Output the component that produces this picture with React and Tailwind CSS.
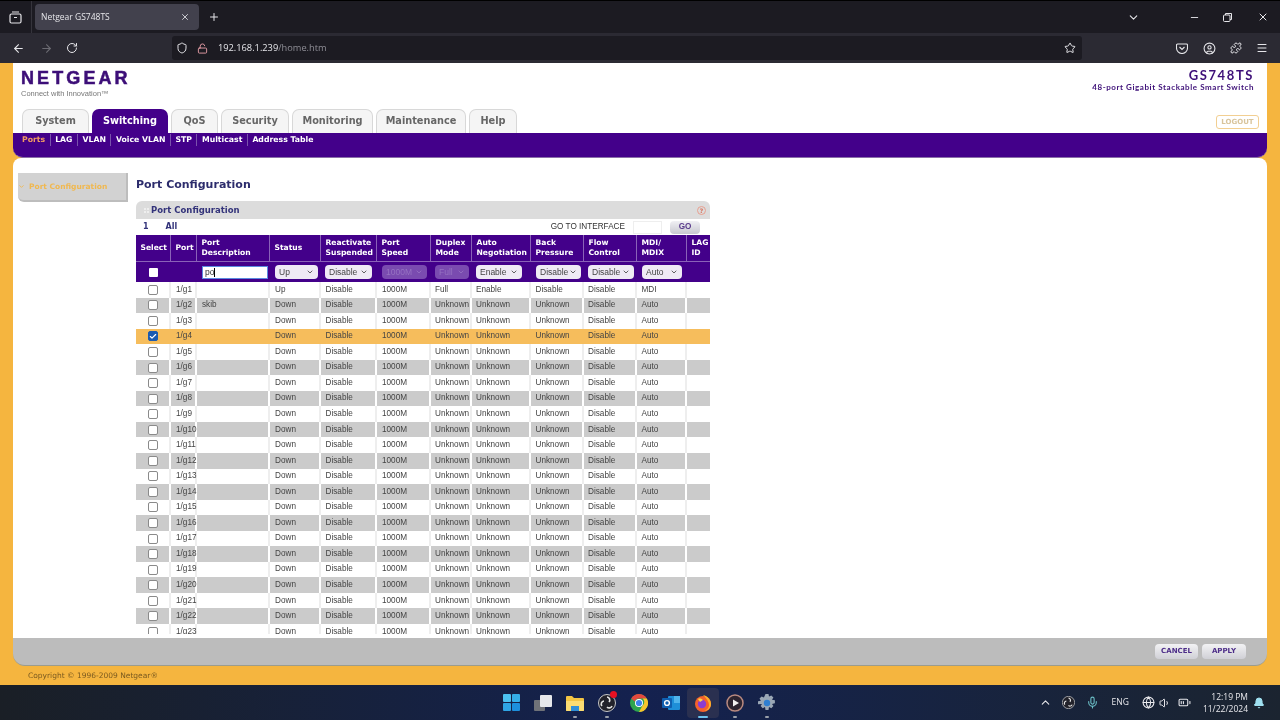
import { ArrowLeft, ArrowRight, RotateCw, Shield, LockOpen, Star, ChevronDown, ChevronUp, Minus, X, Plus, Menu, Puzzle, CircleUser, Check, Mic, Globe, Volume1, BatteryMedium, Bell } from 'lucide-react';

const COLS = 'grid grid-cols-[35px_26px_73px_51px_56px_54px_41px_59px_53px_53px_50px_23px]';

const HEADERS = [
  ['Select'],
  ['Port'],
  ['Port', 'Description'],
  ['Status'],
  ['Reactivate', 'Suspended'],
  ['Port', 'Speed'],
  ['Duplex', 'Mode'],
  ['Auto', 'Negotiation'],
  ['Back', 'Pressure'],
  ['Flow', 'Control'],
  ['MDI/', 'MDIX'],
  ['LAG', 'ID'],
];

const TABS = [
  { label: 'System', width: 'w-[67px]' },
  { label: 'Switching', width: 'w-[76px]', active: true },
  { label: 'QoS', width: 'w-[47px]' },
  { label: 'Security', width: 'w-[68px]' },
  { label: 'Monitoring', width: 'w-[81px]' },
  { label: 'Maintenance', width: 'w-[90px]' },
  { label: 'Help', width: 'w-[48px]' },
];

const SUBNAV = ['Ports', 'LAG', 'VLAN', 'Voice VLAN', 'STP', 'Multicast', 'Address Table'];

const ROWS = Array.from({ length: 23 }, (_, i) => {
  const n = i + 1;
  const first = n === 1;
  return {
    port: `1/g${n}`,
    desc: n === 2 ? 'skib' : '',
    status: first ? 'Up' : 'Down',
    duplex: first ? 'Full' : 'Unknown',
    auto: first ? 'Enable' : 'Unknown',
    back: first ? 'Disable' : 'Unknown',
    mdi: first ? 'MDI' : 'Auto',
    checked: n === 4,
    tone: n === 4 ? 'orange' : n % 2 === 0 ? 'gray' : 'white',
  };
});

const ROW_BG = {
  white: 'bg-white',
  gray: 'bg-[#cbcbcb]',
  orange: 'bg-[#f6bd5c]',
};

function Cell({ tone, className = 'pl-[4.5px]', children }) {
  const line = tone === 'white' ? 'border-[#eeeeee]' : tone === 'gray' ? 'border-white' : 'border-transparent';
  return <div className={`flex items-center border-r-2 whitespace-nowrap ${line} ${className}`}>{children}</div>;
}

function Pill({ label, width, disabled }) {
  return (
    <div className={`flex h-[14px] items-center justify-between rounded-[4px] pl-[4px] pr-[4px] font-['Liberation_Sans',sans-serif] text-[8.5px] ${width} ${disabled ? 'bg-[#7a4bb0] text-[#9672c2]' : 'bg-[#efeaf5] text-[#444]'}`}>
      {label}
      <ChevronDown size={8} strokeWidth={2.5} />
    </div>
  );
}

function Checkbox({ checked }) {
  return (
    <div className={`flex h-[10px] w-[10px] items-center justify-center rounded-[2px] border ${checked ? 'border-[#1c5bb0] bg-[#1c5bb0]' : 'border-[#8a8a8a] bg-white'}`}>
      {checked && <Check size={9} strokeWidth={3.5} className="text-white" />}
    </div>
  );
}

function WindowsLogo() {
  return (
    <svg width="17" height="17" viewBox="0 0 17 17">
      <rect x="0" y="0" width="8" height="8" rx="1" fill="#4cc2f1" />
      <rect x="9" y="0" width="8" height="8" rx="1" fill="#35aee8" />
      <rect x="0" y="9" width="8" height="8" rx="1" fill="#2fa6e6" />
      <rect x="9" y="9" width="8" height="8" rx="1" fill="#1d8fdc" />
    </svg>
  );
}

function TaskViewIcon() {
  return (
    <svg width="18" height="16" viewBox="0 0 18 16">
      <rect x="0" y="5" width="11" height="11" rx="1" fill="#6f7278" />
      <rect x="6" y="0" width="12" height="12" rx="1" fill="#e6e8ec" />
    </svg>
  );
}

function FolderIcon() {
  return (
    <svg width="18" height="16" viewBox="0 0 18 16">
      <path d="M0 2 a1 1 0 0 1 1-1 h5 l2 2 h9 a1 1 0 0 1 1 1 v11 a1 1 0 0 1-1 1 H1 a1 1 0 0 1-1-1 Z" fill="#f3c544" />
      <path d="M0 6 h18 v9 a1 1 0 0 1-1 1 H1 a1 1 0 0 1-1-1 Z" fill="#fbdc72" />
      <rect x="5" y="11" width="8" height="5" fill="#2f8fd8" />
    </svg>
  );
}

function ObsIcon({ size = 18 }) {
  return (
    <svg width={size} height={size} viewBox="0 0 18 18">
      <circle cx="9" cy="9" r="8.5" fill="#22222a" stroke="#c8c8c8" strokeWidth="1" />
      <path d="M9 3 a3 3 0 0 1 2 5 M14 12 a3 3 0 0 1-5 1 M4 12 a3 3 0 0 1 2-5" fill="none" stroke="#e4e4e4" strokeWidth="1.6" />
    </svg>
  );
}

function ChromeIcon() {
  return (
    <svg width="18" height="18" viewBox="0 0 18 18">
      <circle cx="9" cy="9" r="9" fill="#2ea44f" />
      <path d="M9 0 a9 9 0 0 1 7.8 4.5 H9 a4.5 4.5 0 0 0-4.2 3 L1.2 4.5 A9 9 0 0 1 9 0 Z" fill="#e2483d" />
      <path d="M16.8 4.5 A9 9 0 0 1 9 18 l3.6-6.5 a4.5 4.5 0 0 0 0-7 Z" fill="#f7c52d" />
      <circle cx="9" cy="9" r="4" fill="#fff" />
      <circle cx="9" cy="9" r="3.1" fill="#3d83ee" />
    </svg>
  );
}

function OutlookIcon() {
  return (
    <svg width="18" height="16" viewBox="0 0 18 16">
      <rect x="6" y="1" width="12" height="14" rx="1" fill="#1e8fd8" />
      <rect x="12" y="1" width="6" height="7" fill="#4fb4ec" />
      <rect x="0" y="3" width="10" height="10" rx="1" fill="#0f5fb0" />
      <circle cx="5" cy="8" r="2.4" fill="none" stroke="#fff" strokeWidth="1.4" />
    </svg>
  );
}

function FirefoxIcon() {
  return (
    <svg width="18" height="18" viewBox="0 0 18 18">
      <circle cx="9" cy="10" r="8" fill="#f4612c" />
      <path d="M9 1 c5 1 8 5 8 9 c0 4-3 7-7 7 c3-1 5-3 5-6 c0-3-2-6-6-10 Z" fill="#fcb02a" />
      <circle cx="8" cy="10" r="4.2" fill="#8b3dd1" />
      <path d="M4 5 c2-1 4 0 5 1 l-3 2 Z" fill="#fcd24a" />
    </svg>
  );
}

function PlayerIcon() {
  return (
    <svg width="18" height="18" viewBox="0 0 18 18">
      <circle cx="9" cy="9" r="8" fill="#2c2430" stroke="#b98a80" strokeWidth="1.5" />
      <path d="M7 5.5 L13 9 L7 12.5 Z" fill="#f1f1f1" />
    </svg>
  );
}

function GearIcon() {
  return (
    <svg width="18" height="18" viewBox="0 0 18 18">
      <path d="M7.5 0 h3 l.5 2.6 2.3-1.2 2.1 2.1-1.4 2.2 2.9.6 v3 l-2.9.6 1.4 2.2-2.1 2.1-2.3-1.2-.5 2.9 h-3 l-.5-2.9-2.3 1.2-2.1-2.1 1.4-2.2 L0 10.3 v-3 l2.9-.6 L1.500 4.500 l2.100-2.100 2.300 1.200 Z" fill="#9aa7b5" />
      <circle cx="9" cy="9" r="3.200" fill="#2f7fd1" />
    </svg>
  );
}

const TASK_ICONS = [
  { icon: <WindowsLogo /> },
  { icon: <TaskViewIcon /> },
  { icon: <FolderIcon />, dot: true },
  { icon: <ObsIcon />, dot: true, badge: true },
  { icon: <ChromeIcon /> },
  { icon: <OutlookIcon /> },
  { icon: <FirefoxIcon />, active: true },
  { icon: <PlayerIcon />, dot: true },
  { icon: <GearIcon />, dot: true },
];

function BrowserChrome() {
  return (
    <div className="font-['Open_Sans',sans-serif] text-[#e6e6ea]">
      {/* tab strip */}
      <div className="flex h-[33px] items-center border-t border-black bg-[#1c1b22]">
        <div className="flex h-full w-[32px] items-center justify-center border-r border-[#35343c]">
          <svg width="13" height="13" viewBox="0 0 13 13" fill="none" stroke="#e6e6ea" strokeWidth="1.2">
            <rect x="1" y="3" width="11" height="9" rx="1.5" />
            <path d="M3 1 h7 M5 6.500 h3" />
          </svg>
        </div>
        <div className="ml-[3px] flex h-[26px] w-[164px] items-center justify-between rounded-[4px] bg-[#42414d] pl-[6px] pr-[9px] text-[8.5px]">
          Netgear GS748TS
          <X size={10} />
        </div>
        <Plus size={12} className="ml-[9px]" />
        <ChevronDown size={13} className="ml-[907px]" />
        <Minus size={11} className="ml-[49px]" />
        <svg width="9" height="9" viewBox="0 0 9 9" fill="none" stroke="#e6e6ea" className="ml-[23px]">
          <rect x="0.500" y="2" width="6.500" height="6.500" rx="1" />
          <path d="M2.500 2 V0.500 H8.500 V6.500 H7" />
        </svg>
        <X size={12} className="ml-[25px]" />
      </div>
      {/* toolbar */}
      <div className="flex h-[30px] items-center bg-[#2b2a33]">
        <ArrowLeft size={13} className="ml-[12px]" />
        <ArrowRight size={13} className="ml-[15px] text-[#6b6a72]" />
        <RotateCw size={12} className="ml-[13px]" />
        <div className="ml-[94px] flex h-[24px] w-[910px] items-center rounded-[3px] bg-[#1c1b22] pl-[4px] pr-[6px]">
          <Shield size={12} />
          <LockOpen size={11} className="ml-[9px] text-[#e8a0a8]" />
          <span className="ml-[10px] text-[9.25px]">
            192.168.1.239<span className="text-[#8f8e96]">/home.htm</span>
          </span>
          <Star size={12} className="ml-auto" />
        </div>
        <svg width="12" height="11" viewBox="0 0 12 11" fill="none" stroke="#e6e6ea" strokeWidth="1.1" className="ml-[94px]">
          <path d="M1.500 1 h9 a1 1 0 0 1 1 1 v3 a5.500 5.500 0 0 1-11 0 v-3 a1 1 0 0 1 1-1 Z M3.500 4 L6 6.500 L8.500 4" />
        </svg>
        <CircleUser size={13} className="ml-[15px]" />
        <Puzzle size={12} className="ml-[14px]" />
        <Menu size={12} className="ml-[14px]" />
      </div>
    </div>
  );
}

function PortTable() {
  return (
    <div className="w-[574px]">
      <div className="flex h-[18px] items-center rounded-t-[6px] bg-[#dcdcdc] pl-[8px] pr-[4px] font-['DejaVu_Sans',sans-serif] text-[8.5px] font-bold text-[#33337a]">
        <span className="mr-[2px] grid grid-cols-2 gap-[1px]">
          <i className="h-[2px] w-[2px] bg-[#eeeeee]" /><i className="h-[2px] w-[2px] bg-[#eeeeee]" />
          <i className="h-[2px] w-[2px] bg-[#eeeeee]" /><i className="h-[2px] w-[2px] bg-[#eeeeee]" />
        </span>
        Port Configuration
        <span className="ml-auto flex h-[9px] w-[9px] items-center justify-center rounded-full border border-[#e8a090] text-[6px] text-[#d8705c]">?</span>
      </div>
      <div className="flex h-[16px] items-center pl-[7px] pr-[10px] font-['Liberation_Sans',sans-serif] text-[8.2px] text-[#333]">
        <span className="font-['DejaVu_Sans',sans-serif] text-[8px] font-bold text-[#33337a]">1</span>
        <span className="ml-[17px] font-['DejaVu_Sans',sans-serif] text-[8px] font-bold text-[#33337a]">All</span>
        <span className="ml-auto">GO TO INTERFACE</span>
        <div className="ml-[8px] h-[13px] w-[29px] border border-[#eeeeee]" />
        <div className="ml-[8px] flex h-[13px] w-[30px] items-center justify-center rounded-[4px] bg-gradient-to-b from-[#f0f0f4] to-[#c8c8d0] font-bold text-[#5a3c8c]">GO</div>
      </div>
      <div className={`${COLS} h-[27px] bg-[#43008a] font-['DejaVu_Sans',sans-serif] text-[7.6px] font-bold leading-[10px] text-white`}>
        {HEADERS.map((lines, i) => (
          <div key={i} className={`flex flex-col justify-center border-b border-[#8a62b8] pl-[4.5px] whitespace-nowrap ${i < 11 ? 'border-r' : ''}`}>
            {lines.map((line) => <span key={line}>{line}</span>)}
          </div>
        ))}
      </div>
      <div className={`${COLS} h-[20px] items-center bg-[#43008a]`}>
        <div className="flex justify-center"><div className="h-[9px] w-[9px] rounded-[1px] bg-white" /></div>
        <div />
        <div className="pl-[5px]">
          <div className="flex h-[13px] w-[66px] items-center border border-[#5a8ae0] bg-white pl-[2px] font-['Liberation_Sans',sans-serif] text-[8.5px] text-[#333]">
            po<span className="h-[9px] w-px bg-black" />
          </div>
        </div>
        <div className="pl-[5px]"><Pill label="Up" width="w-[43px]" /></div>
        <div className="pl-[4px]"><Pill label="Disable" width="w-[47px]" /></div>
        <div className="pl-[5px]"><Pill label="1000M" width="w-[45px]" disabled /></div>
        <div className="pl-[4px]"><Pill label="Full" width="w-[34px]" disabled /></div>
        <div className="pl-[4px]"><Pill label="Enable" width="w-[46px]" /></div>
        <div className="pl-[5px]"><Pill label="Disable" width="w-[45px]" /></div>
        <div className="pl-[4px]"><Pill label="Disable" width="w-[46px]" /></div>
        <div className="pl-[5px]"><Pill label="Auto" width="w-[40px]" /></div>
        <div />
      </div>
      <div className="h-[352px] overflow-hidden font-['Liberation_Sans',sans-serif] text-[8.2px] text-[#444]">
        {ROWS.map((row) => (
          <div key={row.port} className={`${COLS} h-[15.55px] ${ROW_BG[row.tone]}`}>
            <Cell tone={row.tone} className="justify-center"><Checkbox checked={row.checked} /></Cell>
            <Cell tone={row.tone} className="pl-[5px]">{row.port}</Cell>
            <Cell tone={row.tone} className="pl-[5px]">{row.desc}</Cell>
            <Cell tone={row.tone} className="pl-[5px]">{row.status}</Cell>
            <Cell tone={row.tone}>Disable</Cell>
            <Cell tone={row.tone} className="pl-[5px]">1000M</Cell>
            <Cell tone={row.tone} className="pl-[4px]">{row.duplex}</Cell>
            <Cell tone={row.tone} className="pl-[4px]">{row.auto}</Cell>
            <Cell tone={row.tone}>{row.back}</Cell>
            <Cell tone={row.tone} className="pl-[4px]">Disable</Cell>
            <Cell tone={row.tone}>{row.mdi}</Cell>
            <div />
          </div>
        ))}
      </div>
    </div>
  );
}

function NetgearPage() {
  return (
    <div className="flex h-[622px] flex-col bg-[#f5b53f] font-['DejaVu_Sans',sans-serif]">
      <div className="mx-[13px] flex min-h-0 flex-1 flex-col">
        {/* masthead */}
        <div className="h-[46px] shrink-0 bg-white pl-[8px] pr-[13px]">
          <div className="flex items-start justify-between">
            <div className="pt-[6px]">
              <div className="font-['Liberation_Sans',sans-serif] text-[18px] leading-[18px] font-bold tracking-[3.1px] text-[#3d0f78] [-webkit-text-stroke:0.5px_#3d0f78]">NETGEAR</div>
              <div className="pt-[2px] font-['Liberation_Sans',sans-serif] text-[7.500px] leading-[9px] text-[#777]">Connect with Innovation™</div>
            </div>
            <div className="pt-[4px] text-right text-[#3d0f78]">
              <div className="font-['Lato',sans-serif] text-[13px] leading-[16px] font-bold tracking-[1.6px]">GS748TS</div>
              <div className="font-['Lato',sans-serif] text-[8px] leading-[9px] font-bold tracking-[0.57px]">48-port Gigabit Stackable Smart Switch</div>
            </div>
          </div>
        </div>
        {/* tabs */}
        <div className="flex h-[24px] shrink-0 items-end bg-white pl-[9px] pr-[8px]">
          <div className="flex h-full gap-[3px]">
            {TABS.map((tab) => (
              <div
                key={tab.label}
                className={`flex items-center justify-center rounded-t-[7px] text-[9.75px] font-bold ${tab.width} ${tab.active ? 'bg-[#43008a] text-white' : 'border border-b-0 border-[#d8d8d8] bg-[#f5f5f5] text-[#666]'}`}
              >
                {tab.label}
              </div>
            ))}
          </div>
          <div className="mb-[4px] ml-auto flex h-[14px] w-[43px] items-center justify-center rounded-[3px] border border-[#f2cf92] text-[7px] font-bold text-[#d8c49c]">LOGOUT</div>
        </div>
        {/* sub nav */}
        <div className="flex h-[25px] shrink-0 items-start rounded-b-[10px] border-b border-[#8a70a8] bg-[#43008a] pl-[9px] pt-[1px] text-[7.75px] font-bold text-white">
          {SUBNAV.map((item, i) => (
            <span key={item} className={`flex h-[12px] items-center ${i > 0 ? 'ml-[4.5px] border-l border-[#7a52ac] pl-[4.5px]' : ''} ${i === 0 ? 'text-[#f29a62]' : ''}`}>
              {item}
            </span>
          ))}
        </div>
        {/* content */}
        <div className="flex min-h-0 flex-1 rounded-t-[8px] bg-white pl-[5px] pt-[15px]">
          <div className="flex h-[29px] w-[110px] shrink-0 items-center rounded-bl-[6px] border-r-2 border-b-2 border-[#bdbdbd] bg-[#d2d2d2] text-[7.5px] font-bold text-[#f0b850]">
            <ChevronDown size={7} strokeWidth={3} className="mr-[4px]" />
            Port Configuration
          </div>
          <div className="ml-[8px] flex min-h-0 flex-col">
            <div className="h-[28px] pt-[4px] text-[11px] font-bold text-[#2c2c6c]">Port Configuration</div>
            <PortTable />
          </div>
        </div>
        {/* footer actions */}
        <div className="flex h-[28px] shrink-0 items-start justify-end gap-[4px] rounded-b-[12px] border-b border-[#9c9c8c] bg-[#bcbcbc] pr-[21px] pt-[6px] text-[7px] font-bold text-[#4c2c88]">
          <div className="flex h-[15px] w-[43px] items-center justify-center rounded-[4px] bg-gradient-to-b from-[#f2f2f4] to-[#d0d0d6]">CANCEL</div>
          <div className="flex h-[15px] w-[44px] items-center justify-center rounded-[4px] bg-gradient-to-b from-[#f2f2f4] to-[#d0d0d6]">APPLY</div>
        </div>
      </div>
      <div className="flex h-[19px] shrink-0 items-center pl-[28px] text-[7.500px] text-[#7a5a20]">Copyright © 1996-2009 Netgear®</div>
    </div>
  );
}

function Taskbar() {
  return (
    <div className="flex h-[35px] items-center bg-gradient-to-r from-[#1a1f26] via-[#14214f] to-[#1b2430] font-['Open_Sans',sans-serif] text-[#e8e8ec]">
      <div className="flex pl-[495px]">
        {TASK_ICONS.map((item, i) => (
          <div key={i} className={`relative flex h-[30px] w-[32px] items-center justify-center rounded-[4px] ${item.active ? 'bg-[#2a3050]' : ''}`}>
            {item.icon}
            {item.badge && <span className="absolute right-[6px] top-[3px] h-[7px] w-[7px] rounded-full bg-[#e81123]" />}
            {item.dot && <span className="absolute bottom-0 h-[2px] w-[4px] rounded-full bg-[#9aa0aa]" />}
            {item.active && <span className="absolute bottom-0 h-[2px] w-[10px] rounded-full bg-[#6cc4f0]" />}
          </div>
        ))}
      </div>
      <div className="ml-auto flex items-center pr-[15px]">
        <ChevronUp size={13} />
        <div className="ml-[10px]"><ObsIcon size={13} /></div>
        <Mic size={13} className="ml-[11px] text-[#6cc0c8]" />
        <span className="ml-[13px] text-[8.500px]">ENG</span>
        <Globe size={13} className="ml-[13px]" />
        <Volume1 size={12} className="ml-[4px]" />
        <BatteryMedium size={13} className="ml-[7px]" />
        <div className="ml-[12px] text-right text-[8.500px] leading-[12px]">
          <div>12:19 PM</div>
          <div>11/22/2024</div>
        </div>
        <Bell size={12} className="ml-[5px] fill-[#9fe0f0] text-[#9fe0f0]" />
      </div>
    </div>
  );
}

export default function App() {
  return (
    <div className="h-[720px] w-[1280px] overflow-hidden bg-black blur-[0.3px]">
      <BrowserChrome />
      <NetgearPage />
      <Taskbar />
    </div>
  );
}
